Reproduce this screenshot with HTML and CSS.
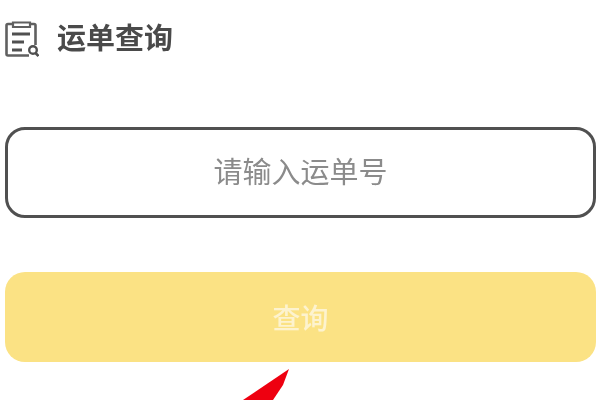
FILE: index.html
```html
<!DOCTYPE html>
<html lang="zh">
<head>
<meta charset="utf-8">
<title>运单查询</title>
<link rel="stylesheet" href="styles.css">
</head>
<body>
<main class="page">
  <header class="title-row">
    <svg class="title-icon" viewBox="0 0 34 38" width="34" height="38" aria-hidden="true">
      <path d="M8 4H3Q1.500 4 1.500 5.500V34Q1.500 35.500 3 35.500H24" fill="none" stroke="#606060" stroke-width="2.600"/>
      <path d="M25 4H29Q30.500 4 30.500 5.500V25" fill="none" stroke="#606060" stroke-width="2.600"/>
      <path d="M8 2.500H25V7H8Z" fill="none" stroke="#606060" stroke-width="2.200"/>
      <path d="M7 14H25M7 22H19M7 30H17" fill="none" stroke="#505050" stroke-width="2.800"/>
      <circle cx="28" cy="30" r="3.800" fill="none" stroke="#505050" stroke-width="2.400"/>
      <path d="M30.500 33L33.500 36" fill="none" stroke="#505050" stroke-width="2.600"/>
    </svg>
    <h1 class="title">运单查询</h1>
  </header>
  <div class="field">请输入运单号</div>
  <div class="submit">查询</div>
</main>
<svg class="arrow" viewBox="0 0 600 400" width="600" height="400" aria-hidden="true">
  <polygon points="289,369 283,385 273,400 243,400" fill="#ee0010"/>
</svg>
</body>
</html>
```
FILE: styles.css
```css
html, body {
  margin: 0;
  padding: 0;
  width: 600px;
  height: 400px;
  overflow: hidden;
  background: #fff;
}
body {
  position: relative;
  font-family: "Noto Sans CJK SC", "Noto Sans", sans-serif;
}
.page {
  display: flex;
  flex-direction: column;
  padding: 20px 4px 0 5px;
}
.title-row {
  display: flex;
  align-items: center;
  gap: 18px;
  height: 38px;
}
.title-icon {
  flex: none;
  filter: blur(0.6px);
}
.title {
  margin: 0 0 6px;
  font-size: 29px;
  line-height: 36px;
  font-weight: 700;
  color: #4a4a4a;
  filter: blur(0.6px);
}
.field {
  box-sizing: border-box;
  height: 91px;
  margin-top: 69px;
  padding-bottom: 6px;
  display: flex;
  align-items: center;
  justify-content: center;
  border: 3px solid #505050;
  border-radius: 20px;
  font-size: 29px;
  color: #8b8b8b;
  filter: blur(0.5px);
}
.submit {
  height: 90px;
  margin-top: 54px;
  display: flex;
  align-items: center;
  justify-content: center;
  background: #fbe284;
  border-radius: 20px;
  font-size: 28px;
  font-weight: 500;
  color: #fdf3cf;
  filter: blur(0.5px);
}
.arrow {
  position: absolute;
  left: 0;
  top: 0;
  filter: blur(0.5px);
}
```
